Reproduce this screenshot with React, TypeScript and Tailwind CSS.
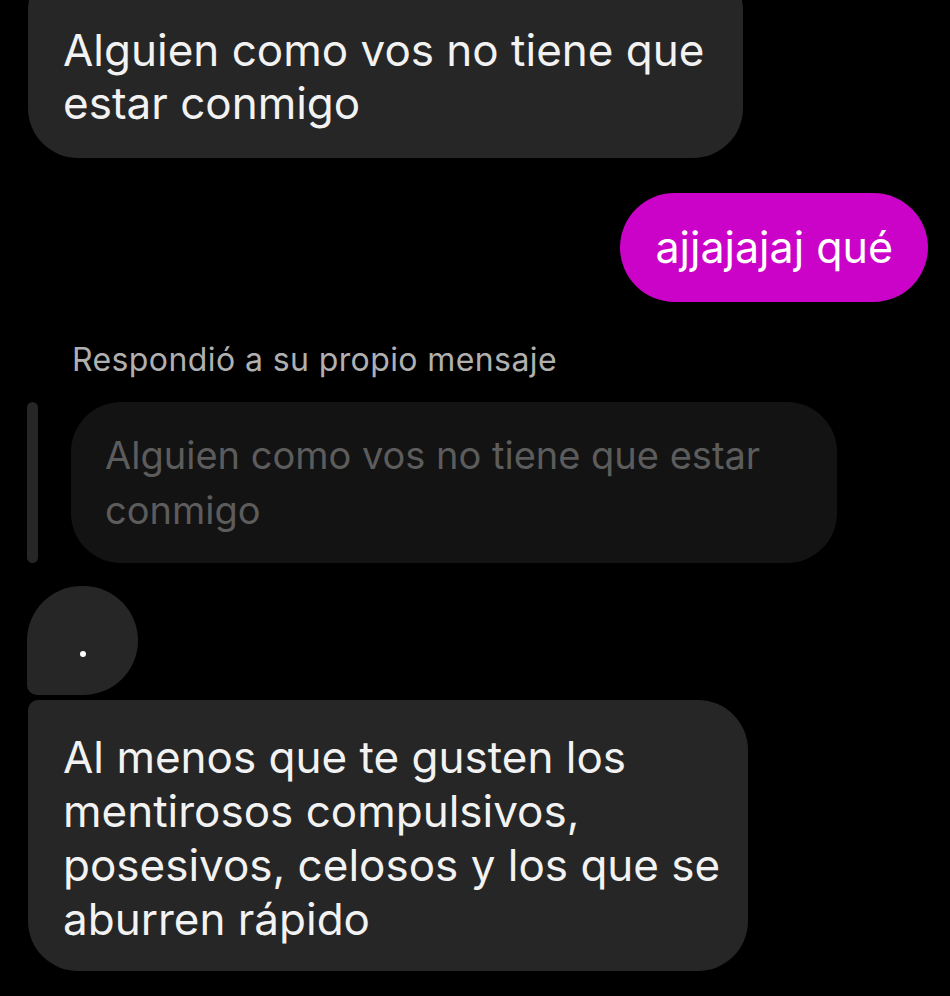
import React from 'react';

const font = { fontFamily: 'Inter, "Noto Sans", sans-serif' };

const App = () => {
  return (
    <div className="w-[950px] h-[996px] overflow-hidden bg-black text-white" style={font}>
      {/* Incoming message (cut off at top) */}
      <div className="ml-[28px] -mt-[40px] w-[715px] rounded-[50px] bg-[#262626] pt-[64px] pb-[28px] pl-[35px] pr-[20px] text-[44px] leading-[53px] text-[#f2f2f2]">
        Alguien como vos no tiene que estar conmigo
      </div>

      {/* Outgoing message */}
      <div className="flex justify-end pr-[22px] mt-[35px]">
        <div className="h-[109px] rounded-full bg-[#cb02c7] px-[35px] flex items-center text-[43px] text-white">
          ajjajajaj qué
        </div>
      </div>

      {/* Reply label */}
      <div className="mt-[37px] ml-[72px] text-[32px] leading-[42px] tracking-[0.4px] text-[#b0b0b0]">
        Respondió a su propio mensaje
      </div>

      {/* Quoted message */}
      <div className="mt-[21px] flex">
        <div className="ml-[27px] w-[11px] h-[161px] rounded-full bg-[#262626]" />
        <div className="ml-[33px] w-[766px] h-[161px] rounded-[50px] bg-[#131313] pl-[34px] pr-[40px] pt-[26px] text-[38px] leading-[55px] text-[#5c5c5c]">
          Alguien como vos no tiene que estar conmigo
        </div>
      </div>

      {/* Dot message */}
      <div className="mt-[23px] ml-[27px] w-[111px] h-[109px] rounded-[55px] rounded-bl-[10px] bg-[#262626] flex items-center justify-center">
        <span className="w-[6px] h-[6px] rounded-full bg-white mt-[26px]" />
      </div>

      {/* Last message */}
      <div className="mt-[5px] ml-[28px] w-[720px] h-[271px] rounded-[50px] rounded-tl-[10px] bg-[#262626] pl-[35px] pr-[20px] pt-[30px] text-[44px] leading-[54px] text-[#f2f2f2]">
        Al menos que te gusten los mentirosos compulsivos, posesivos, celosos y los que se aburren rápido
      </div>
    </div>
  );
};

export default App;
